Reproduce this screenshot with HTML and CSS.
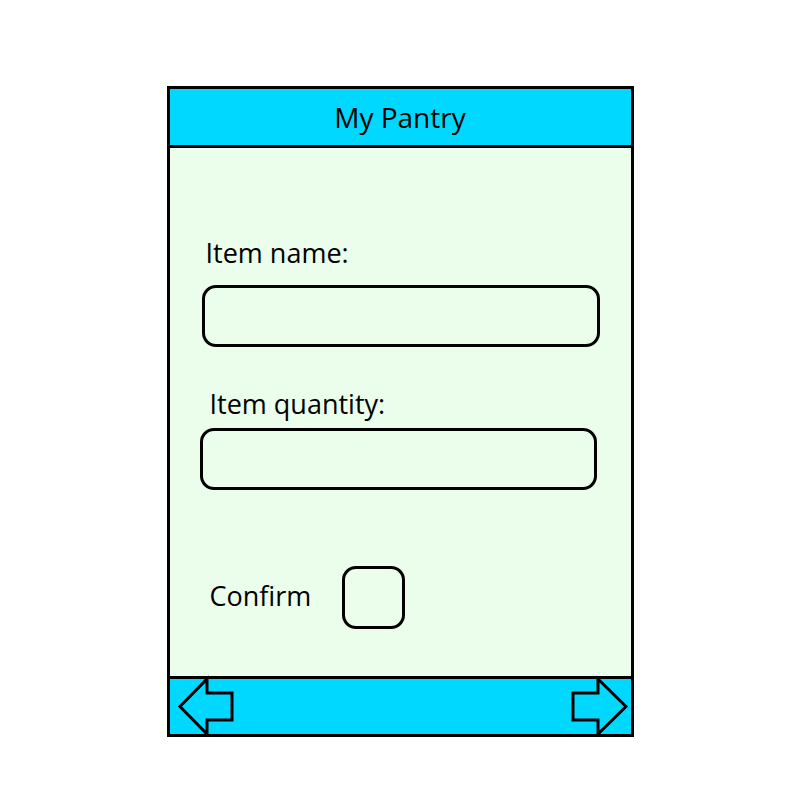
FILE: index.html
```html
<!DOCTYPE html>
<html lang="en">
<head>
  <meta charset="UTF-8">
  <meta name="viewport" content="width=device-width, initial-scale=1.0">
  <title>My Pantry</title>
  <link rel="stylesheet" href="styles.css">
</head>
<body>
  <div class="phone">
    <div class="header">My Pantry</div>

    <div class="content">
      <label class="label label-name" for="itemName">Item name:</label>
      <input type="text" id="itemName" class="field field-name">

      <label class="label label-qty" for="itemQty">Item quantity:</label>
      <input type="text" id="itemQty" class="field field-qty">

      <div class="confirm-row">
        <label class="confirm-text" for="confirmBox">Confirm</label>
        <input type="checkbox" id="confirmBox" class="confirm-box">
      </div>
    </div>

    <div class="footer">
      <!-- back / forward arrows -->
      <svg class="arrow" width="70" height="55" viewBox="0 0 70 55">
        <polygon points="10,27.5 37,0 37,14 62,14 62,41 37,41 37,55" />
      </svg>
      <svg class="arrow" width="70" height="55" viewBox="0 0 70 55">
        <polygon points="65,27.5 37,0 37,14 12,14 12,41 37,41 37,55" />
      </svg>
    </div>
  </div>
</body>
</html>
```

FILE: styles.css
```css
body {
  margin: 0;
  background-color: #fff;
  font-family: "Open Sans", Lato, sans-serif;
  color: #000;
}
.phone {
  width: 461px;
  margin: 86px auto 0;
  border: 3px solid #000;
  background-color: #ebfdeb;
}
.header {
  height: 56px;
  line-height: 56px;
  text-align: center;
  font-size: 28px;
  background-color: #00d8ff;
  border-bottom: 3px solid #000;
}
.content {
  height: 531px;
  padding-top: 90px;
  box-sizing: border-box;
  border-bottom: 3px solid #000;
}
.label {
  display: block;
  font-size: 27px;
  line-height: 30px;
}
.label-name {
  margin-left: 36px;
}
.label-qty {
  margin-top: 42px;
  margin-left: 40px;
}
.field {
  display: block;
  box-sizing: border-box;
  height: 62px;
  border: 3px solid #000;
  border-radius: 14px;
  background-color: #ebfdeb;
  outline: none;
  font: inherit;
}
.field-name {
  width: 398px;
  margin: 17px 0 0 32px;
}
.field-qty {
  width: 397px;
  margin: 9px 0 0 30px;
}
.confirm-row {
  display: flex;
  align-items: center;
  margin-top: 76px;
}
.confirm-text {
  width: 132px;
  font-size: 27px;
  line-height: 30px;
  margin-left: 40px;
  margin-bottom: 3px;
}
.confirm-box {
  appearance: none;
  box-sizing: border-box;
  width: 63px;
  height: 63px;
  margin: 0;
  border: 3px solid #000;
  border-radius: 14px;
  background-color: #ebfdeb;
}
.footer {
  height: 55px;
  display: flex;
  justify-content: space-between;
  background-color: #00d8ff;
}
.arrow {
  overflow: visible;
}
.arrow polygon {
  fill: none;
  stroke: #000;
  stroke-width: 3;
}
```
